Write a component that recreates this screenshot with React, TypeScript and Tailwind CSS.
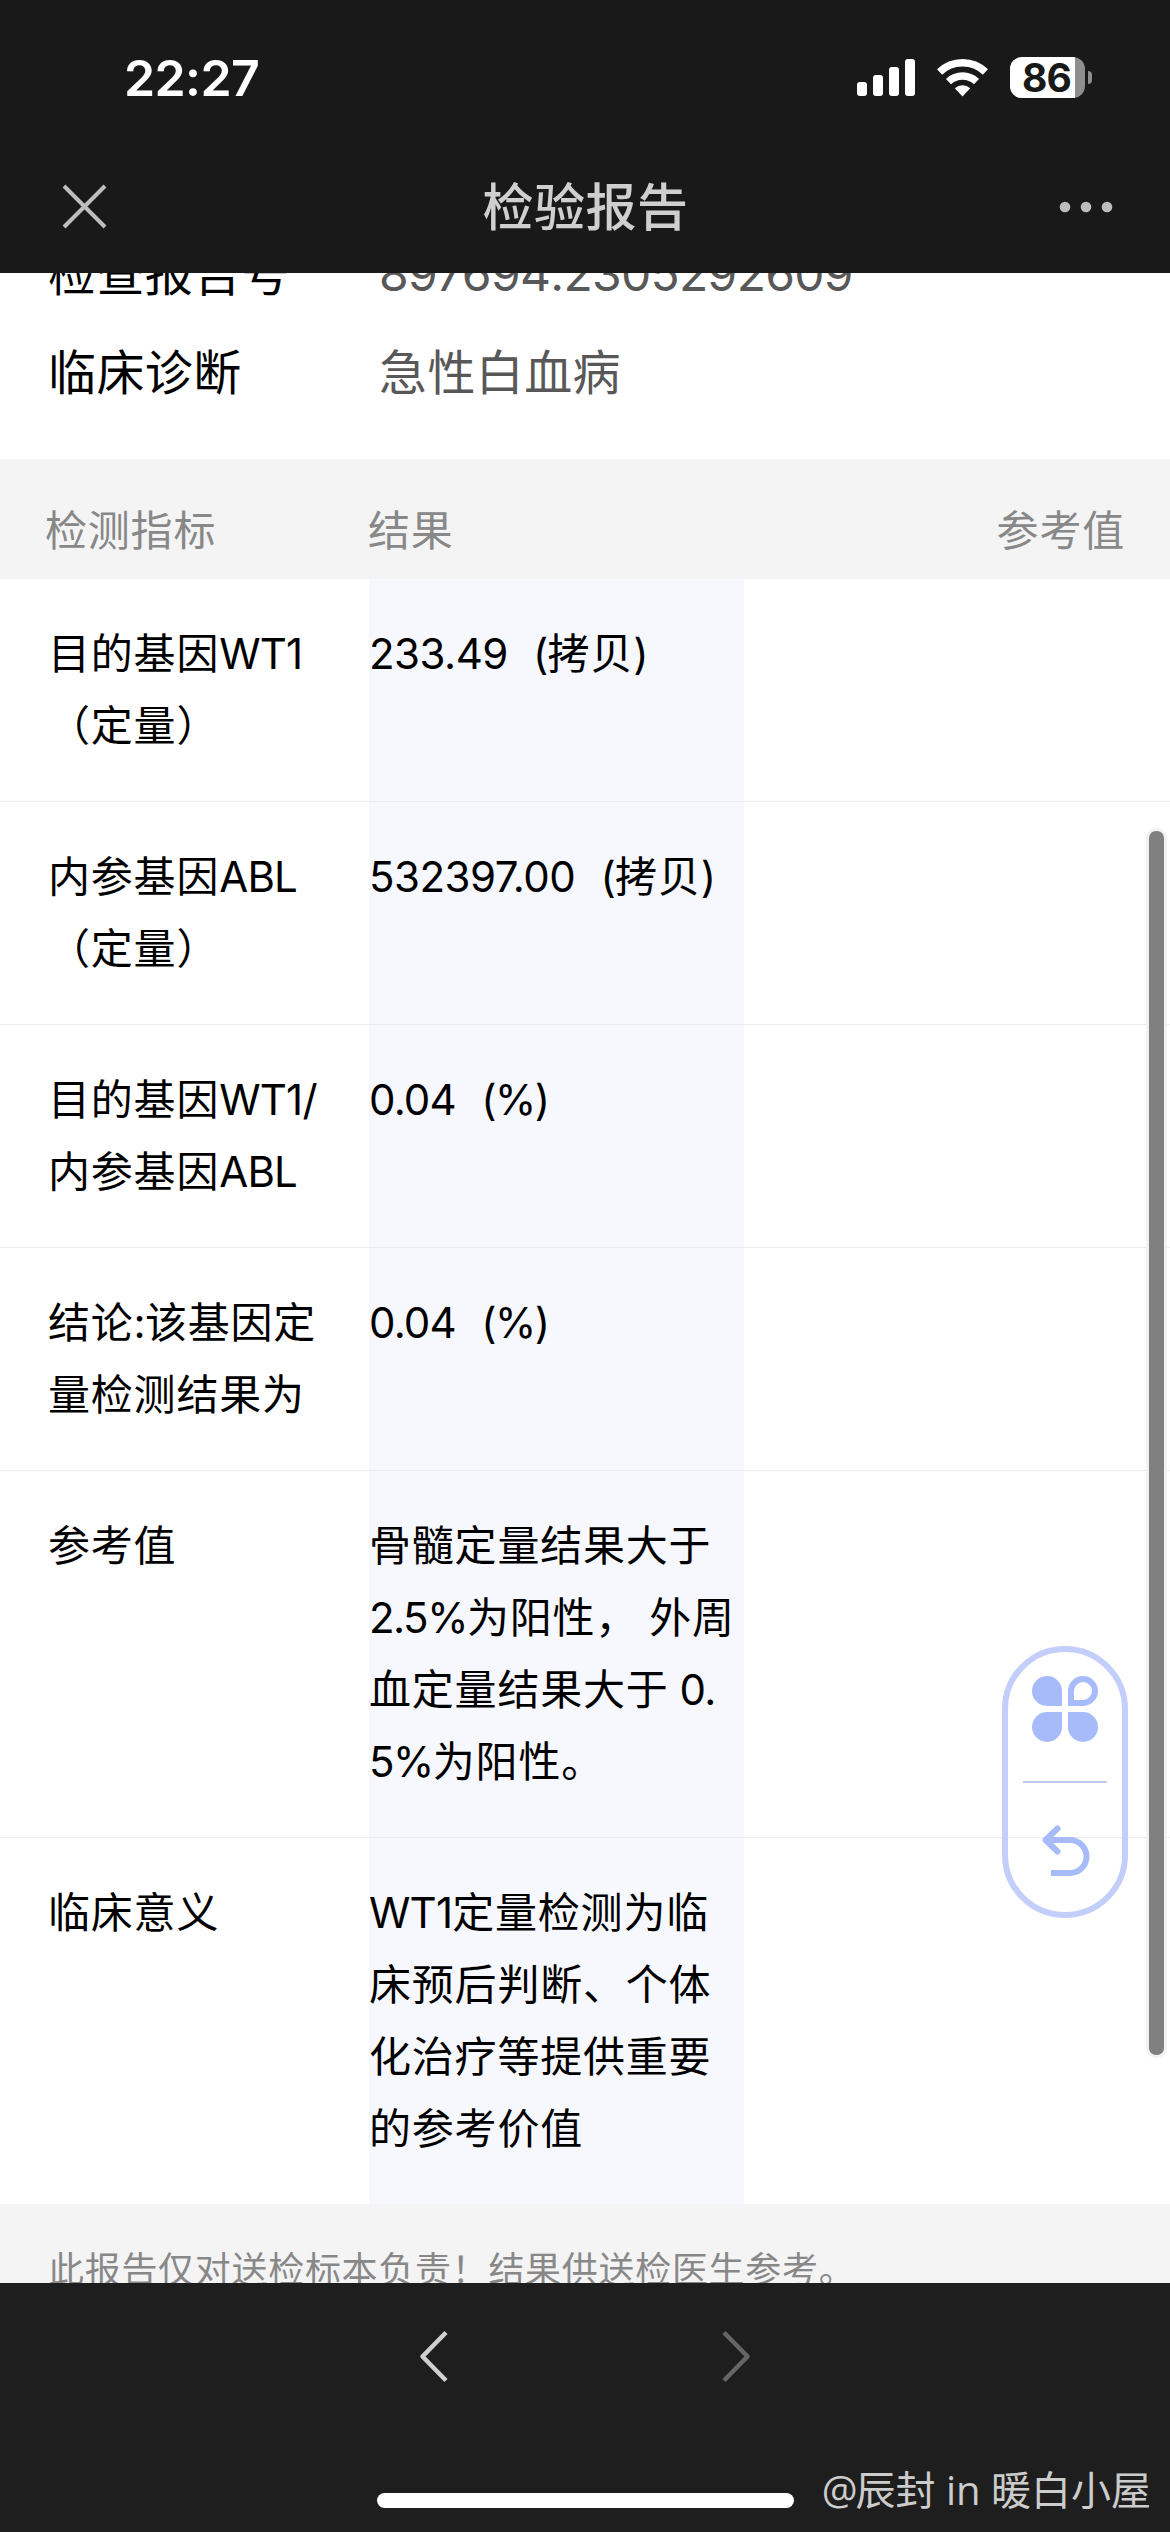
import React from 'react';

const rows = [
  { name: ['目的基因WT1', '（定量）'], value: ['233.49\u00a0\u00a0(拷贝)'] },
  { name: ['内参基因ABL', '（定量）'], value: ['532397.00\u00a0\u00a0(拷贝)'] },
  { name: ['目的基因WT1/', '内参基因ABL'], value: ['0.04\u00a0\u00a0(%)'] },
  { name: ['结论:该基因定', '量检测结果为'], value: ['0.04\u00a0\u00a0(%)'] },
  { name: ['参考值'], value: ['骨髓定量结果大于', '2.5%为阳性， 外周', '血定量结果大于 0.', '5%为阳性。'] },
  { name: ['临床意义'], value: ['WT1定量检测为临', '床预后判断、个体', '化治疗等提供重要', '的参考价值'] },
];

// Latin runs are set tighter than the Chinese text around them
function Mixed({ text }: { text: string }) {
  return (
    <>
      {text.split(/(\d{2,}\.\d+|[\x20-\x7e]+)/).map((part, i) => {
        if (i % 2 === 0) return part;
        const tracking = /^\d{2,}\./.test(part)
          ? 'tracking-[-0.5px]'
          : part.includes('%')
          ? 'tracking-[-1.5px]'
          : 'tracking-[-0.8px]';
        return <span key={i} className={tracking}>{part}</span>;
      })}
    </>
  );
}

function StatusBar() {
  return (
    <div className="h-[142px] flex items-start justify-between pl-[124px] pr-[78px] pt-[57px]">
      <span className="text-[50px] leading-[42px] font-semibold text-white tracking-[-0.6px]">22:27</span>
      <div className="flex items-start">
        <svg width="58" height="42" viewBox="0 0 58 42" fill="#fff">
          <rect x="0" y="25" width="10" height="14" rx="3" />
          <rect x="16" y="18" width="10" height="21" rx="3" />
          <rect x="32" y="10" width="10" height="29" rx="3" />
          <rect x="48" y="2" width="10" height="37" rx="3" />
        </svg>
        <svg className="ml-[22px]" width="51" height="42" viewBox="0 0 51 42">
          <g fill="none" stroke="#fff" strokeWidth="7.4">
            <path d="M2.6 15 A33 33 0 0 1 48.4 15" />
            <path d="M11.5 24.6 A20.5 20.5 0 0 1 39.5 24.6" />
          </g>
          <path d="M25.5 39.5 L17.8 31.2 A11.6 11.6 0 0 1 33.2 31.2 Z" fill="#fff" />
        </svg>
        <div className="ml-[22px] w-[75px] h-[41px] rounded-[12px] bg-[#8e8e8e] overflow-hidden">
          <div className="w-[65px] h-[41px] bg-white pl-[12px] text-[39px] leading-[42px] font-bold text-[#191919] tracking-[-0.8px]">86</div>
        </div>
        <div className="ml-[3px] mt-[14px] w-[4px] h-[13px] rounded-r-full bg-[#8e8e8e]" />
      </div>
    </div>
  );
}

function NavBar() {
  return (
    <div className="h-[131px] flex items-start justify-between pl-[62px] pr-[57px] pt-[31px]">
      <svg className="mt-[11px]" width="45" height="45" viewBox="0 0 45 45" stroke="#bdbdbd" strokeWidth="4">
        <path d="M2 2 L43 43 M43 2 L2 43" />
      </svg>
      <h1 className="mt-[1px] ml-[5px] text-[51px] leading-[68px] font-medium text-[#cfcfcf] tracking-[0.5px]">检验报告</h1>
      <svg className="mt-[28px]" width="54" height="12" viewBox="0 0 54 12" fill="#bdbdbd">
        <circle cx="6" cy="6" r="5.3" />
        <circle cx="27" cy="6" r="5.3" />
        <circle cx="48" cy="6" r="5.3" />
      </svg>
    </div>
  );
}

function FloatingMenu() {
  return (
    <div className="absolute left-[1002px] top-[1646px] w-[126px] h-[272px] rounded-full border-[6px] border-[#c4cefa] flex flex-col items-center">
      <svg className="mt-[24px]" width="66" height="66" viewBox="0 0 66 66" fill="#a7bbfb">
        <path d="M30 30 H15 A15 15 0 1 1 30 15 Z" />
        <path d="M39 27 V15 A12 12 0 1 1 51 27 Z" fill="none" stroke="#a7bbfb" strokeWidth="6" />
        <path d="M30 36 V51 A15 15 0 1 1 15 36 Z" />
        <path d="M36 36 H51 A15 15 0 1 1 36 51 Z" />
      </svg>
      <div className="mt-[39px] w-[84px] h-[2px] bg-[#c0caf0]" />
      <svg className="mt-[42px] ml-[2px]" width="48" height="52" viewBox="0 0 48 52" fill="none" stroke="#a7bbfb" strokeWidth="6" strokeLinejoin="round">
        <path d="M15.5 3.5 L3.5 15 L15.5 26.5" strokeLinecap="round" />
        <path d="M4 15 H28 A16.5 16.5 0 0 1 28 48 H9" />
      </svg>
    </div>
  );
}

function App() {
  return (
    <div className="relative w-[1170px] h-[2532px] overflow-hidden bg-white flex flex-col font-[Inter,'Noto_Sans_CJK_SC',sans-serif]">
      <header className="h-[273px] shrink-0 bg-[#191919]">
        <StatusBar />
        <NavBar />
      </header>

      <main className="h-[2010px] shrink-0 overflow-hidden">
        {/* Scrolled info list */}
        <div className="h-[186px] flex flex-col justify-end pb-[37px] text-[48px] leading-[99px]">
          <div className="flex">
            <span className="w-[330px] pl-[48px] text-black tracking-[0.4px]">检查报告号</span>
            <span className="pl-[49px] text-[#585858] tracking-[-0.7px]">897694:2305292609</span>
          </div>
          <div className="flex">
            <span className="w-[330px] pl-[48px] text-black tracking-[0.4px]">临床诊断</span>
            <span className="pl-[49px] text-[#585858] tracking-[0.4px]">急性白血病</span>
          </div>
        </div>

        {/* Table header */}
        <div className="h-[120px] bg-[#f4f4f4] flex pt-[24px] pl-[45px] pr-[45px] text-[42px] leading-[96px] text-[#888888] tracking-[0.8px]">
          <span className="w-[323px]">检测指标</span>
          <span className="flex-1">结果</span>
          <span>参考值</span>
        </div>

        {rows.map((row, i) => (
          <div
            key={i}
            className="flex border-b border-[#ececee] last-of-type:border-b-0 bg-white text-[42px] leading-[72px] text-black tracking-[0.8px] whitespace-pre"
          >
            <div className="w-[369px] pl-[48px] py-[39px]">
              {row.name.map((line) => (
                <div key={line}><Mixed text={line} /></div>
              ))}
            </div>
            <div className="w-[375px] py-[39px] bg-[#f7f8fe]">
              {row.value.map((line) => (
                <div key={line}><Mixed text={line} /></div>
              ))}
            </div>
          </div>
        ))}

        <p className="h-[79px] bg-[#f4f4f4] pl-[48px] pt-[36px] text-[36px] leading-[60px] text-[#888888] tracking-[0.7px]">
          此报告仅对送检标本负责！结果供送检医生参考。
        </p>
      </main>

      {/* Browser toolbar */}
      <footer className="flex-1 bg-[#1e1e1e] flex flex-col items-center">
        <div className="mt-[47px] w-[332px] h-[54px] flex justify-between">
          <svg width="30" height="54" viewBox="0 0 30 54" fill="none" stroke="#d0d0d0" strokeWidth="4.5" strokeLinejoin="round">
            <path d="M27 2.5 L3.5 26.5 L27 50.5" />
          </svg>
          <svg width="30" height="54" viewBox="0 0 30 54" fill="none" stroke="#666666" strokeWidth="4.5" strokeLinejoin="round">
            <path d="M3 2.5 L26.5 26.5 L3 50.5" />
          </svg>
        </div>
        <div className="mt-[109px] w-[417px] h-[15px] rounded-full bg-white" />
      </footer>

      <FloatingMenu />
      <div className="absolute left-[1146px] top-[828px] w-[21px] h-[1230px] rounded-[10px] border-[3px] border-[#f2f2f2] bg-[#808080]" />
      <div className="absolute right-[19px] top-[2460px] text-[40px] leading-[60px] text-[#cccccc] whitespace-pre font-['Open_Sans','Noto_Sans_CJK_SC',sans-serif]">
        <span className="tracking-[-2px]">@</span>辰封 in 暖白小屋
      </div>
    </div>
  );
}

export default App;
